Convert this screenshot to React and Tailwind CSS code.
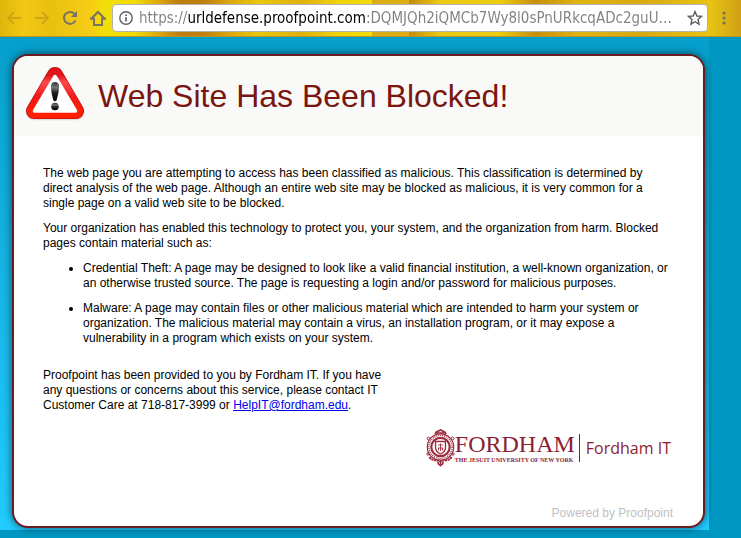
import React, { useState } from 'react';

const NavButton = ({ label, disabled, className, children }) => (
  <button
    type="button"
    aria-label={label}
    disabled={disabled}
    className={`flex h-6 shrink-0 items-center justify-center ${disabled ? 'text-[#d0a414]' : 'text-[#77735f]'} ${className}`}
  >
    {children}
  </button>
);

const WarningIcon = () => (
  <svg width="60" height="60" viewBox="0 0 60 60" aria-hidden="true">
    <defs>
      <linearGradient id="warnRed" x1="0" y1="0" x2="0" y2="1">
        <stop offset="0" stopColor="#e0121c" />
        <stop offset="0.2" stopColor="#ff4a4a" />
        <stop offset="0.6" stopColor="#f01a1a" />
        <stop offset="1" stopColor="#ff1e00" />
      </linearGradient>
      <linearGradient id="warnMark" x1="0" y1="0" x2="0" y2="1">
        <stop offset="0" stopColor="#333" />
        <stop offset="0.3" stopColor="#777" />
        <stop offset="0.55" stopColor="#222" />
        <stop offset="1" stopColor="#000" />
      </linearGradient>
    </defs>
    <path d="M30 9 L51 45 H9 Z" fill="none" stroke="#aaa" strokeWidth="17" strokeLinejoin="round" opacity="0.35" transform="translate(0 .7)" />
    <path d="M30 9 L51 45 H9 Z" fill="url(#warnRed)" stroke="#c01010" strokeWidth="16" strokeLinejoin="round" />
    <path d="M30 9 L51 45 H9 Z" fill="url(#warnRed)" stroke="url(#warnRed)" strokeWidth="14.5" strokeLinejoin="round" />
    <path d="M30 10.500 L50.500 45 H9.500 Z" fill="#fff" stroke="#fff" strokeWidth="3.500" strokeLinejoin="round" />
    <path d="M26 20 C26 14.500 34 14.500 34 20 C34 27 32.300 31 31.700 34 C31.200 35.500 28.800 35.500 28.300 34 C27.700 31 26 27 26 20 Z" fill="url(#warnMark)" />
    <circle cx="30" cy="40.500" r="3.800" fill="url(#warnMark)" />
  </svg>
);

const FordhamSeal = () => (
  <svg width="29" height="38" viewBox="0 0 29 38" fill="none" stroke="#9b2c40" aria-hidden="true">
    <circle cx="14.500" cy="18" r="13.200" strokeWidth="1.200" />
    <circle cx="14.500" cy="18" r="11.600" strokeWidth="1.400" strokeDasharray="1 1" />
    <circle cx="14.500" cy="18" r="9.200" strokeWidth="2.200" />
    <path d="M9.500 12.500 H19.500 V18 C19.500 22 17 24 14.500 25 C12 24 9.500 22 9.500 18 Z" strokeWidth="1.300" />
    <path d="M12 16 H17 M14.500 14.500 V22 M12.500 19 V21.500 M16.500 19 V21.500 M12 19 H17" strokeWidth="0.900" />
    <path d="M9 5 C10 1 13 3 14.500 0.800 C16 3 19 1 20 5 M10.500 4 H18.500" strokeWidth="1.600" />
    <path d="M3.500 28 C7 33 10 30 14.500 32.500 C19 30 22 33 25.500 28" strokeWidth="2.200" strokeDasharray="2.200 0.600" />
    <path d="M12 33 C12 37 17 37 17 33 M14.500 32 V37.500" strokeWidth="1.500" />
    <circle cx="2.500" cy="9.500" r="1.400" strokeWidth="1" />
    <circle cx="26.500" cy="9.500" r="1.400" strokeWidth="1" />
    <circle cx="2" cy="25" r="1.200" strokeWidth="1" />
    <circle cx="27" cy="25" r="1.200" strokeWidth="1" />
  </svg>
);

const BrowserBar = () => {
  const [url, setUrl] = useState('https://urldefense.proofpoint.com:DQMJQh2iQMCb7Wy8l0sPnURkcqADc2guU…');

  return (
    <header className="flex h-[37px] items-center border-b border-[#b8961c] bg-[linear-gradient(90deg,#dcb80c_0px,#f2c814_25px,#e8c010_50px,#f6cc14_90px,#f0e008_105px,#f0dc0a_135px,#dca410_160px,#bc7c10_180px,#c08010_205px,#dca810_230px,#e8c80e_260px,#e0b010_300px,#f0d40c_340px,#f0dc08_372px,#dbae16_372px,#dbae16_409px,#c48810_409px,#ecca14_440px,#eccc10_500px,#c88e10_535px,#e0b414_580px,#d8a814_640px,#e8c414_710px,#d0a014_741px)] pr-[13px] pl-1">
      <NavButton label="Back" disabled className="w-5">
        <svg width="16" height="14" viewBox="0 0 16 14" fill="none" stroke="currentColor" strokeWidth="1.800"><path d="M15 7 H2 M8 1 L2 7 L8 13" /></svg>
      </NavButton>
      <NavButton label="Forward" disabled className="ml-2 w-5">
        <svg width="16" height="14" viewBox="0 0 16 14" fill="none" stroke="currentColor" strokeWidth="1.800"><path d="M1 7 H14 M8 1 L14 7 L8 13" /></svg>
      </NavButton>
      <NavButton label="Reload" className="ml-2 w-5">
        <svg width="16" height="16" viewBox="0 0 16 16" fill="none" stroke="currentColor" strokeWidth="2"><path d="M13.500 10.300 A6 6 0 1 1 12.500 3.900" /><path d="M15 1 V7 H9 Z" fill="currentColor" stroke="none" /></svg>
      </NavButton>
      <NavButton label="Home" className="ml-2 w-5">
        <svg width="18" height="18" viewBox="0 0 18 18" fill="none" stroke="currentColor" strokeWidth="2"><path d="M2 10 L9 3 L16 10 M1 9.800 H5 V16 H13 V9.800 H17" /></svg>
      </NavButton>
      <div className="ml-1 flex h-7 min-w-0 flex-1 items-center rounded border border-[#b5b2a8] bg-white pr-1 pl-1.5 text-[#5f5f5f]">
        <svg className="shrink-0" width="14" height="14" viewBox="0 0 14 14" fill="none" stroke="currentColor" strokeWidth="1.400" aria-hidden="true"><circle cx="7" cy="7" r="6.200" /><path d="M7 6.200 V10.500 M7 3.400 V5" strokeWidth="1.700" /></svg>
        <input
          type="text"
          aria-label="Address"
          value={url}
          onChange={(e) => setUrl(e.target.value)}
          className="ml-1.5 min-w-0 flex-1 bg-[linear-gradient(90deg,#808080_49px,#000_49px,#000_228px,#808080_228px)] bg-clip-text font-['DejaVu_Sans_Condensed','DejaVu_Sans',sans-serif] text-[15px] text-transparent outline-none"
        />
        <button type="button" aria-label="Bookmark this page" className="shrink-0">
          <svg width="16" height="16" viewBox="0 0 16 16" fill="none" stroke="currentColor" strokeWidth="1.400"><path d="M8 1.600 L9.900 6 L14.600 6.400 L11 9.500 L12.100 14.200 L8 11.700 L3.900 14.200 L5 9.500 L1.400 6.400 L6.100 6 Z" /></svg>
        </button>
      </div>
      <NavButton label="Menu" className="ml-3 w-2">
        <svg width="4" height="14" viewBox="0 0 4 14" fill="currentColor"><circle cx="2" cy="2" r="1.600" /><circle cx="2" cy="7" r="1.600" /><circle cx="2" cy="12" r="1.600" /></svg>
      </NavButton>
    </header>
  );
};

const App = () => (
  <div className="flex min-h-screen flex-col bg-[#0098c3] font-['Liberation_Sans',Arial,sans-serif] text-black">
    <BrowserBar />
    <main className="mr-8 mb-2 flex flex-1 flex-col bg-linear-to-b from-[#069fcc] to-[#22ccff] pt-[17px] pr-1 pb-0.5 pl-3">
      <article className="flex flex-1 flex-col overflow-hidden rounded-2xl border-2 border-[#6b1c20] bg-white shadow-[0_0_8px_rgba(0,0,0,0.6)]">
        <div className="flex h-20 items-center bg-[#f9f9f7] pl-[11px]">
          <WarningIcon />
          <h1 className="ml-[13px] text-[32px] text-[#7a1510]">Web Site Has Been Blocked!</h1>
        </div>
        <div className="flex flex-1 flex-col pt-[30px] pr-[30px] pb-[5px] pl-[29px] text-xs leading-[15px]">
          <p>
            The web page you are attempting to access has been classified as malicious. This classification is determined by
            direct analysis of the web page. Although an entire web site may be blocked as malicious, it is very common for a
            single page on a valid web site to be blocked.
          </p>
          <p className="mt-2.5">
            Your organization has enabled this technology to protect you, your system, and the organization from harm. Blocked
            pages contain material such as:
          </p>
          <ul className="mt-2.5 list-disc space-y-2.5 pl-10">
            <li>
              Credential Theft: A page may be designed to look like a valid financial institution, a well-known organization, or
              an otherwise trusted source. The page is requesting a login and/or password for malicious purposes.
            </li>
            <li>
              Malware: A page may contain files or other malicious material which are intended to harm your system or
              organization. The malicious material may contain a virus, an installation program, or it may expose a
              vulnerability in a program which exists on your system.
            </li>
          </ul>
          <p className="mt-[22px] max-w-[350px]">
            Proofpoint has been provided to you by Fordham IT. If you have any questions or concerns about this service, please
            contact IT Customer Care at 718-817-3999 or{' '}
            <a href="mailto:HelpIT@fordham.edu" className="text-[#0000ee] underline">HelpIT@fordham.edu</a>.
          </p>
          <div className="mt-4 mr-0.5 flex items-center self-end text-[#8c1d33]">
            <FordhamSeal />
            <div className="flex flex-col font-['Liberation_Serif',serif]">
              <span className="text-2xl leading-6">FORDHAM</span>
              <span className="text-[6px] leading-2 font-bold">THE JESUIT UNIVERSITY OF NEW YORK</span>
            </div>
            <span className="ml-1 h-7 w-px bg-[#8c1d33]" />
            <span className="ml-1.5 font-['Open_Sans',sans-serif] text-base leading-5 font-medium">Fordham IT</span>
          </div>
          <footer className="mt-auto self-end text-[#bfbfbf]">Powered by Proofpoint</footer>
        </div>
      </article>
    </main>
  </div>
);

export default App;
